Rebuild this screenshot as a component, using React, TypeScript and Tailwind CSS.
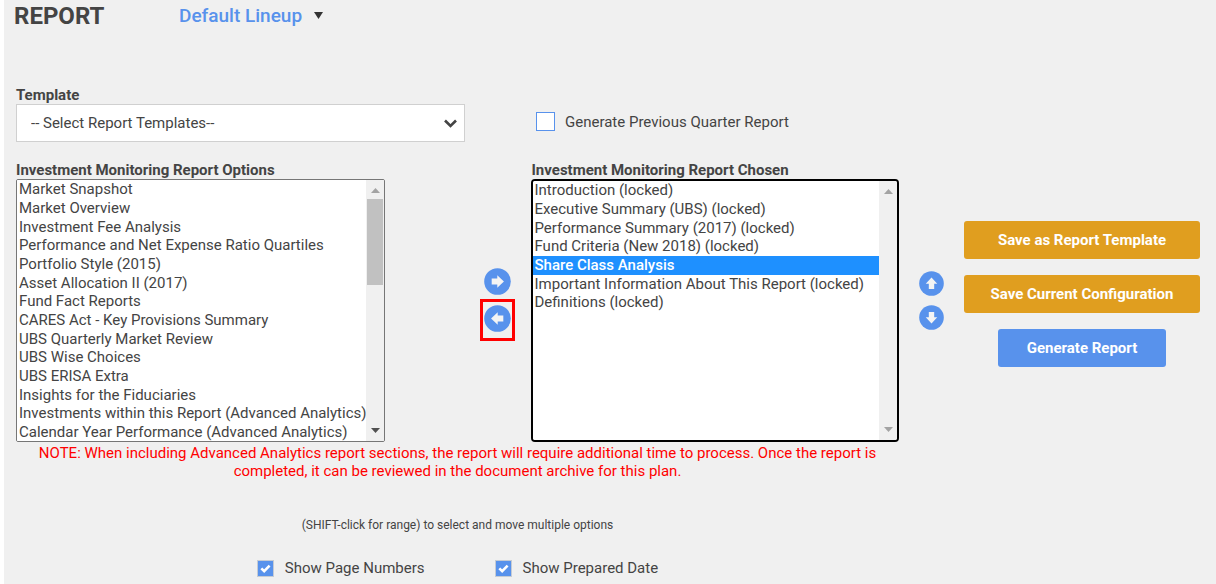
import { useState } from "react";
import type { ReactNode } from "react";

const available = [
  "Market Snapshot",
  "Market Overview",
  "Investment Fee Analysis",
  "Performance and Net Expense Ratio Quartiles",
  "Portfolio Style (2015)",
  "Asset Allocation II (2017)",
  "Fund Fact Reports",
  "CARES Act - Key Provisions Summary",
  "UBS Quarterly Market Review",
  "UBS Wise Choices",
  "UBS ERISA Extra",
  "Insights for the Fiduciaries",
  "Investments within this Report (Advanced Analytics)",
  "Calendar Year Performance (Advanced Analytics)",
];

const chosen = [
  "Introduction (locked)",
  "Executive Summary (UBS) (locked)",
  "Performance Summary (2017) (locked)",
  "Fund Criteria (New 2018) (locked)",
  "Share Class Analysis",
  "Important Information About This Report (locked)",
  "Definitions (locked)",
];

function Triangle({ down, className }: { down?: boolean; className: string }) {
  return (
    <svg viewBox="0 0 9 5" className={`h-[5px] w-[9px] ${className}`} aria-hidden="true">
      <path d={down ? "M0 0h9L4.5 5z" : "M0 5h9L4.5 0z"} fill="currentColor" />
    </svg>
  );
}

function ListBox({
  id,
  items,
  initial,
  active,
}: {
  id: string;
  items: string[];
  initial: string[];
  active?: boolean;
}) {
  const [value, setValue] = useState<string[]>(initial);
  return (
    <div
      className={`flex h-[263px] overflow-hidden bg-white ${
        active ? "rounded border-2 border-black" : "rounded-xs border border-[#767676]"
      }`}
    >
      <select
        id={id}
        multiple
        value={value}
        onChange={(e) => setValue(Array.from(e.target.selectedOptions, (o) => o.value))}
        className={`min-w-0 flex-1 appearance-none overflow-y-auto bg-white text-[15px] text-[#444] outline-none [scrollbar-width:none] [&>option]:h-[19px] [&>option]:min-h-0 [&>option]:p-0 [&>option]:leading-[18px] [&>option:nth-child(3n)]:h-[18px] [&>option:checked]:bg-linear-to-r [&>option:checked]:from-[#1e90ff] [&>option:checked]:to-[#1e90ff] [&>option:checked]:font-medium [&>option:checked]:text-white ${
          active ? "[&>option]:pl-px" : "[&>option]:pl-[2px]"
        }`}
      >
        {items.map((item) => (
          <option key={item} value={item}>
            {item}
          </option>
        ))}
      </select>
      <div className="flex w-[18px] flex-col items-center justify-between bg-[#f0f0f0] py-2" aria-hidden="true">
        <div className="flex w-full flex-col items-center gap-[6px]">
          <Triangle className="text-[#a3a3a3]" />
          {!active && <div className="h-[86px] w-4 bg-[#c1c1c1]" />}
        </div>
        <Triangle down className={active ? "text-[#a3a3a3]" : "text-[#505050]"} />
      </div>
    </div>
  );
}

const rotations = { up: "", right: "rotate-90", down: "rotate-180", left: "-rotate-90" };

function ArrowButton({ dir, label, small }: { dir: keyof typeof rotations; label: string; small?: boolean }) {
  return (
    <button type="button" aria-label={label} className={`block ${small ? "size-[25px]" : "size-[27px]"}`}>
      <svg viewBox="0 0 26 26" className={`size-full ${rotations[dir]}`}>
        <circle cx="13" cy="13" r="12.8" fill="#5892ec" />
        <path d="M13 6.8l6 6.4h-3.2v5.4h-5.6v-5.4H7z" fill="#f4f4f4" />
      </svg>
    </button>
  );
}

function Check({ id, initial, outlined, children }: { id: string; initial?: boolean; outlined?: boolean; children: ReactNode }) {
  const [on, setOn] = useState(!!initial);
  return (
    <div className={`flex items-center ${outlined ? "gap-[10px]" : "gap-[11px]"}`}>
      <span className="grid">
        <input
          id={id}
          type="checkbox"
          checked={on}
          onChange={(e) => setOn(e.target.checked)}
          className={`col-start-1 row-start-1 appearance-none border bg-white checked:bg-[#5892ec] ${
            outlined ? "size-[19px] border-[#5892ec]" : "size-[17px] border-[#c5cbd4]"
          }`}
        />
        {on && (
          <svg viewBox="0 0 17 17" className="pointer-events-none col-start-1 row-start-1 size-[17px]" aria-hidden="true">
            <path d="M4.3 8.3l2.9 2.9 5.4-5.5" fill="none" stroke="#fff" strokeWidth="2.6" />
          </svg>
        )}
      </span>
      <label htmlFor={id}>{children}</label>
    </div>
  );
}

function ActionButton({ blue, children }: { blue?: boolean; children: ReactNode }) {
  return (
    <button
      type="button"
      className={`h-[38px] rounded-[3px] font-bold text-white ${blue ? "w-[168px] bg-[#5892ec]" : "w-full bg-[#e09e1f]"}`}
    >
      {children}
    </button>
  );
}

export default function App() {
  return (
    <div className="min-h-screen bg-white pl-1 font-[Roboto,sans-serif] text-[15px] leading-[18px] text-[#444]">
      <main className="min-h-screen bg-[#f0f0f0] pr-4 pl-3">
        <header className="-ml-[2px] flex h-[31px] items-center">
          <h1 className="w-[165px] text-2xl font-bold">REPORT</h1>
          <button type="button" className="flex items-center gap-3 text-[19px] font-medium text-[#5892ec]">
            Default Lineup
            <svg viewBox="0 0 9 7" className="h-[7px] w-[9px] text-[#333]" aria-hidden="true">
              <path d="M0 0h9L4.5 7z" fill="currentColor" />
            </svg>
          </button>
        </header>

        <div className="mt-[55px] grid grid-cols-[368fr_146px_369fr_65px_236px]">
          <div className="col-span-2 pr-[65px]">
            <label htmlFor="template" className="block font-bold">
              Template
            </label>
            <div className="grid items-center">
              <select
                id="template"
                className="col-start-1 row-start-1 h-[38px] w-full appearance-none border border-[#d0d0d0] bg-white px-[14px] text-[#444]"
              >
                <option>-- Select Report Templates--</option>
              </select>
              <svg
                viewBox="0 0 13 9"
                className="pointer-events-none col-start-1 row-start-1 mr-2 h-[9px] w-[13px] justify-self-end"
                aria-hidden="true"
              >
                <path d="M1 1.5l5.5 5.5L12 1.5" fill="none" stroke="#444" strokeWidth="2.6" />
              </svg>
            </div>
          </div>
          <div className="pt-[26px] pl-[6px]">
            <Check id="previous" outlined>
              Generate Previous Quarter Report
            </Check>
          </div>
        </div>

        <div className="mt-[19px] grid grid-cols-[368fr_146px_369fr_65px_236px]">
          <div>
            <label htmlFor="options" className="block font-bold">
              Investment Monitoring Report Options
            </label>
            <ListBox id="options" items={available} initial={[]} />
          </div>
          <div className="flex flex-col items-end gap-1 pt-[107px] pr-4">
            <div className="flex w-[35px] justify-center">
              <ArrowButton dir="right" label="Add selected" />
            </div>
            <div className="flex h-[42px] w-[35px] justify-center border-3 border-[#ff0000] pt-[3px]">
              <ArrowButton dir="left" label="Remove selected" />
            </div>
          </div>
          <div>
            <label htmlFor="chosen" className="block font-bold">
              Investment Monitoring Report Chosen
            </label>
            <ListBox id="chosen" items={chosen} initial={["Share Class Analysis"]} active />
          </div>
          <div className="flex flex-col items-center gap-[9px] pt-[110px]">
            <ArrowButton dir="up" label="Move up" small />
            <ArrowButton dir="down" label="Move down" small />
          </div>
          <div className="flex flex-col items-center gap-4 pt-[60px]">
            <ActionButton>Save as Report Template</ActionButton>
            <ActionButton>Save Current Configuration</ActionButton>
            <ActionButton blue>Generate Report</ActionButton>
          </div>
        </div>

        <div className="mr-[301px] text-center">
          <p className="mt-[2px] px-5 text-[#ff0000]">
            NOTE: When including Advanced Analytics report sections, the report will require additional time to process. Once the
            report is completed, it can be reviewed in the document archive for this plan.
          </p>
          <p className="mt-9 text-xs leading-[18px]">(SHIFT-click for range) to select and move multiple options</p>
          <div className="mt-[25px] flex justify-center gap-[70px]">
            <Check id="pages" initial>
              Show Page Numbers
            </Check>
            <Check id="date" initial>
              Show Prepared Date
            </Check>
          </div>
        </div>
      </main>
    </div>
  );
}
